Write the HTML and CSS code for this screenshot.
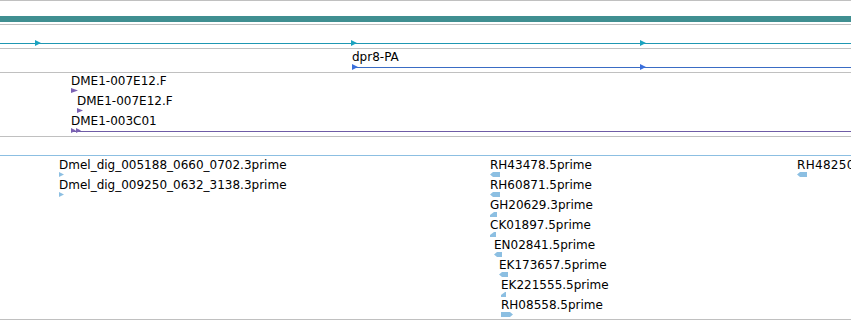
FILE: index.html
```html
<!DOCTYPE html>
<html>
<head>
<meta charset="utf-8">
<link rel="stylesheet" href="styles.css">
</head>
<body>
<div class="browser">
  <div class="track track-top">
    <div class="ruler-bar"></div>
  </div>

  <div class="track track-gene">
    <div class="strand strand-cyan"></div>
    <svg class="mark" style="left:35px;top:15px" width="6" height="6" viewBox="0 0 6 6"><polygon points="0,0 6,3 0,6" fill="#1ba3c0"/></svg>
    <svg class="mark" style="left:351px;top:15px" width="6" height="6" viewBox="0 0 6 6"><polygon points="0,0 6,3 0,6" fill="#1ba3c0"/></svg>
    <svg class="mark" style="left:640px;top:15px" width="6" height="6" viewBox="0 0 6 6"><polygon points="0,0 6,3 0,6" fill="#1ba3c0"/></svg>
  </div>

  <div class="track track-tx">
    <div class="strand strand-blue" style="margin-left:352px"></div>
    <div class="feat" style="left:352px;top:1px"><span class="lbl">dpr8-PA</span></div>
    <svg class="mark" style="left:352px;top:15px" width="6" height="6" viewBox="0 0 6 6"><polygon points="0,0 6,3 0,6" fill="#3a6fdc"/></svg>
    <svg class="mark" style="left:640px;top:15px" width="6" height="6" viewBox="0 0 6 6"><polygon points="0,0 6,3 0,6" fill="#3a6fdc"/></svg>
  </div>

  <div class="track track-clone">
    <div class="strand strand-purple" style="margin-left:71px"></div>
    <div class="feat" style="left:71px;top:1px"><span class="lbl">DME1-007E12.F</span>
      <svg class="glyph" width="8" height="6" viewBox="0 0 8 6"><polygon points="0,0 7,2.5 0,5" fill="#7b62b3"/></svg></div>
    <div class="feat" style="left:77px;top:21px"><span class="lbl">DME1-007E12.F</span>
      <svg class="glyph" width="8" height="6" viewBox="0 0 8 6"><polygon points="0,0 6,2.5 0,5" fill="#7b62b3"/></svg></div>
    <div class="feat" style="left:71px;top:41px"><span class="lbl">DME1-003C01</span>
      <svg class="glyph" width="12" height="6" viewBox="0 0 12 6"><polygon points="0,0 5,2.5 0,5" fill="#7b62b3"/><polygon points="5,0 10,2.5 5,5" fill="#7b62b3"/></svg></div>
  </div>

  <div class="track track-empty"></div>

  <div class="track track-est">
    <div class="feat" style="left:59px;top:2px"><span class="lbl">Dmel_dig_005188_0660_0702.3prime</span>
      <svg class="glyph" width="6" height="6" viewBox="0 0 6 6"><polygon points="0,0 5,2.5 0,5" fill="#8cbfe2"/></svg></div>
    <div class="feat" style="left:59px;top:22px"><span class="lbl">Dmel_dig_009250_0632_3138.3prime</span>
      <svg class="glyph" width="6" height="6" viewBox="0 0 6 6"><polygon points="0,0 5,2.5 0,5" fill="#8cbfe2"/></svg></div>

    <div class="feat" style="left:490px;top:2px"><span class="lbl">RH43478.5prime</span>
      <svg class="glyph" width="11" height="6" viewBox="0 0 11 6"><polygon points="0,2.5 3,0 10,0 10,5 3,5" fill="#8cbfe2"/></svg></div>
    <div class="feat" style="left:490px;top:22px"><span class="lbl">RH60871.5prime</span>
      <svg class="glyph" width="11" height="6" viewBox="0 0 11 6"><polygon points="0,2.5 3,0 10,0 10,5 3,5" fill="#8cbfe2"/></svg></div>
    <div class="feat" style="left:490px;top:42px"><span class="lbl">GH20629.3prime</span>
      <svg class="glyph" width="8" height="6" viewBox="0 0 8 6"><polygon points="0,3 4,0 7,0 7,5 0,5" fill="#8cbfe2"/></svg></div>
    <div class="feat" style="left:490px;top:62px"><span class="lbl">CK01897.5prime</span>
      <svg class="glyph" width="7" height="6" viewBox="0 0 7 6"><polygon points="0,3 4,0 6,0 6,5 0,5" fill="#8cbfe2"/></svg></div>
    <div class="feat" style="left:494px;top:82px"><span class="lbl">EN02841.5prime</span>
      <svg class="glyph" width="9" height="6" viewBox="0 0 9 6"><polygon points="0,2.5 3,0 8,0 8,5 3,5" fill="#8cbfe2"/></svg></div>
    <div class="feat" style="left:499px;top:102px"><span class="lbl">EK173657.5prime</span>
      <svg class="glyph" width="10" height="6" viewBox="0 0 10 6"><polygon points="0,2.5 3,0 9,0 9,5 3,5" fill="#8cbfe2"/></svg></div>
    <div class="feat" style="left:501px;top:122px"><span class="lbl">EK221555.5prime</span>
      <svg class="glyph" width="6" height="6" viewBox="0 0 6 6"><polygon points="0,3 4,0 5,0 5,5 0,5" fill="#8cbfe2"/></svg></div>
    <div class="feat" style="left:501px;top:142px"><span class="lbl">RH08558.5prime</span>
      <svg class="glyph" width="13" height="6" viewBox="0 0 13 6"><polygon points="0,0 9,0 12,2.5 9,5 0,5" fill="#8cbfe2"/></svg></div>

    <div class="feat" style="left:797px;top:2px"><span class="lbl lbl-edge">RH48250.5prime</span>
      <svg class="glyph" width="11" height="6" viewBox="0 0 11 6"><polygon points="0,2.5 3,0 10,0 10,5 3,5" fill="#8cbfe2"/></svg></div>
  </div>
</div>
</body>
</html>
```

FILE: styles.css
```css
html, body {
  margin: 0;
  padding: 0;
  background: #ffffff;
}

body {
  width: 851px;
  height: 320px;
  overflow: hidden;
  font-family: "DejaVu Sans", "Liberation Sans", sans-serif;
  font-size: 12px;
  color: #000000;
}

.browser {
  border-top: 1px solid #c0c0c0;
}

.track {
  position: relative;
  overflow: hidden;
  border-bottom: 1px solid #c0c0c0;
}

.track-top { height: 23px; }
.track-gene { height: 23px; }
.track-tx { height: 23px; }
.track-clone { height: 63px; }
.track-empty { height: 18px; border-bottom-color: #8cbfe2; }
.track-est { height: 163px; }

.ruler-bar {
  margin-top: 15px;
  height: 6px;
  background: #408f91;
}

.strand {
  height: 1px;
}

.track-gene .strand { margin-top: 18px; }
.track-tx .strand { margin-top: 18px; }
.track-clone .strand { margin-top: 58px; }

.strand-cyan { background: #1f97b2; }
.strand-blue { background: #3a6cc4; }
.strand-purple { background: #6f5ca6; }

.mark {
  position: absolute;
  display: block;
}

.feat {
  position: absolute;
  display: flex;
  flex-direction: column;
  align-items: flex-start;
  white-space: nowrap;
}

.lbl {
  display: block;
  line-height: 14px;
}

.lbl-edge {
  letter-spacing: 0.3px;
}

.glyph {
  display: block;
  margin-top: 0;
}
```
